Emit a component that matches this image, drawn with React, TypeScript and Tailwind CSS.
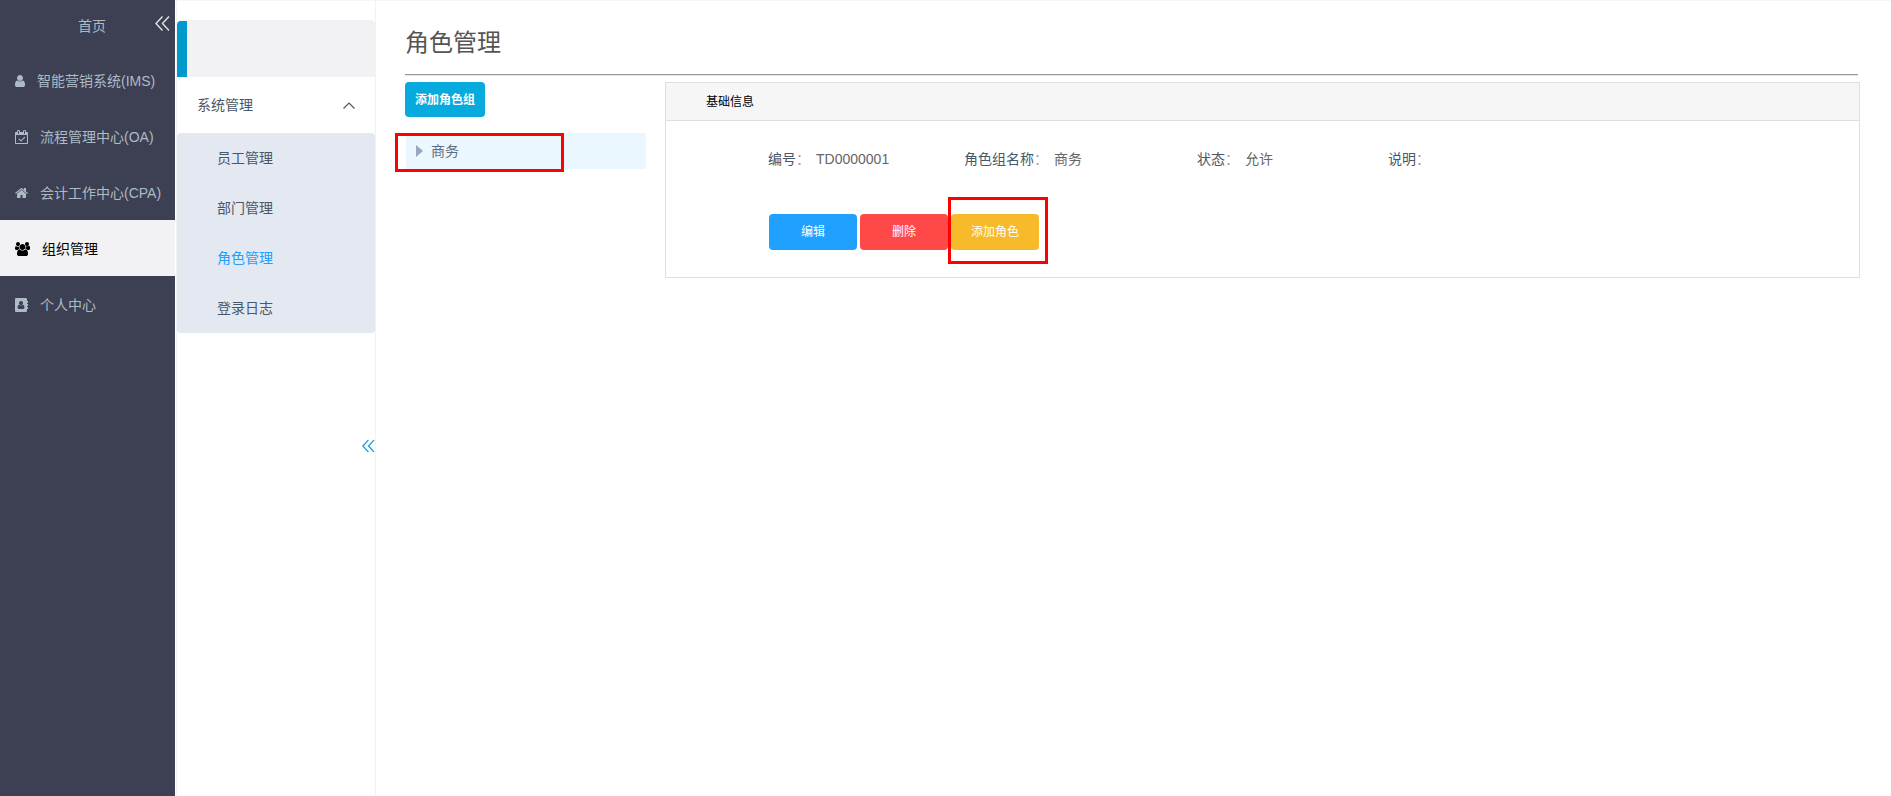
import { ReactNode } from 'react'
import clsx from 'clsx'

interface IconProps {
  className?: string
}

interface NavItem {
  label: string
  icon: ReactNode
  active?: boolean
}

function UserIcon() {
  return (
    <svg viewBox="256 128 1280 1536" className="h-3 w-[10px]" fill="currentColor" aria-hidden="true">
      <path d="M1536 1399q0 109-62.5 187t-150.5 78h-854q-88 0-150.5-78t-62.5-187q0-85 8.5-160.5t31.5-152 58.5-131 94-89 134.5-34.5q131 128 313 128t313-128q76 0 134.5 34.5t94 89 58.5 131 31.5 152 8.5 160.5zm-256-887q0 159-112.5 271.5t-271.5 112.5-271.5-112.5-112.5-271.5 112.5-271.5 271.5-112.5 271.5 112.5 112.5 271.5z" />
    </svg>
  )
}

function CalendarIcon() {
  return (
    <svg viewBox="0 0 1664 1792" className="h-[14px] w-[13px]" fill="currentColor" aria-hidden="true">
      <path d="M1303 964l-512 512q-10 9-23 9t-23-9l-288-288q-9-10-9-23t9-22l46-46q9-9 22-9t23 9l220 220 444-444q10-9 23-9t22 9l46 46q9 9 9 22t-9 23zm-1175 700h1408v-1024h-1408v1024zm384-1216v-288q0-14-9-23t-23-9h-64q-14 0-23 9t-9 23v288q0 14 9 23t23 9h64q14 0 23-9t9-23zm768 0v-288q0-14-9-23t-23-9h-64q-14 0-23 9t-9 23v288q0 14 9 23t23 9h64q14 0 23-9t9-23zm384-64v1280q0 52-38 90t-90 38h-1408q-52 0-90-38t-38-90v-1280q0-52 38-90t90-38h128v-96q0-66 47-113t113-47h64q66 0 113 47t47 113v96h384v-96q0-66 47-113t113-47h64q66 0 113 47t47 113v96h128q52 0 90 38t38 90z" />
    </svg>
  )
}

function HomeIcon() {
  return (
    <svg viewBox="64 0 1664 1792" className="h-[14px] w-[13px]" fill="currentColor" aria-hidden="true">
      <path d="M1472 992v480q0 26-19 45t-45 19h-384v-384h-256v384h-384q-26 0-45-19t-19-45v-480q0-1 .5-3t.5-3l575-474 575 474q1 2 1 6zm223-69l-62 74q-8 9-21 11h-3q-13 0-21-7l-692-577-692 577q-12 8-24 7-13-2-21-11l-62-74q-8-10-7-23.5t11-21.5l719-599q32-26 76-26t76 26l244 204v-195q0-14 9-23t23-9h192q14 0 23 9t9 23v408l219 182q10 8 11 21.5t-7 23.5z" />
    </svg>
  )
}

function UsersIcon() {
  return (
    <svg viewBox="64 0 1920 1792" className="h-[14px] w-[15px]" fill="currentColor" aria-hidden="true">
      <path d="M657 896q-162 5-265 128h-134q-82 0-138-40.5t-56-118.5q0-353 124-353 6 0 43.5 21t97.5 42.5 119 21.5q67 0 133-23-5 37-5 66 0 159 90 294zm1071 637q0 120-73 189.5t-194 69.5h-874q-121 0-194-69.5t-73-189.5q0-53 3.5-103.5t14-109 26.5-108.5 43-97.5 62-81 85.5-53.5 111.5-20q10 0 43 21.5t73 48 107 48 135 21.5 135-21.5 107-48 73-48 43-21.5q61 0 111.5 20t85.5 53.5 62 81 43 97.5 26.5 108.5 14 109 3.5 103.5zm-1024-1277q0 106-75 181t-181 75-181-75-75-181 75-181 181-75 181 75 75 181zm704 384q0 159-112.5 271.5t-271.5 112.5-271.5-112.5-112.5-271.5 112.5-271.5 271.5-112.5 271.5 112.5 112.5 271.5zm576 225q0 78-56 118.5t-138 40.5h-134q-103-123-265-128 90-135 90-294 0-29-5-66 66 23 133 23 59 0 119-21.5t97.5-42.5 43.5-21q124 0 124 353zm-128-609q0 106-75 181t-181 75-181-75-75-181 75-181 181-75 181 75 75 181z" />
    </svg>
  )
}

function AddressBookIcon() {
  return (
    <svg viewBox="0 0 1664 1792" className="h-[14px] w-[13px]" fill="currentColor" fillRule="evenodd" aria-hidden="true">
      <path d="M1028 644q0 107-76.5 183t-183.5 76-183.5-76-76.5-183q0-108 76.5-184t183.5-76 183.5 76 76.5 184zm-48 220q46 0 82.5 17t60 47.5 39.5 67 24 81 11.5 82.5 3.5 79q0 67-39.5 118.5t-105.5 51.5h-576q-66 0-105.5-51.5t-39.5-118.5q0-48 4.5-93.5t18.5-98.5 36.5-91.5 63-64.5 93.5-26h5q7 4 32 19.5t35.5 21 33 17 37 16 35 9 39.5 4.5 39.5-4.5 35-9 37-16 33-17 35.5-21 32-19.5zm684-256q0 13-9.5 22.5t-22.5 9.5h-96v128h96q13 0 22.5 9.5t9.5 22.5v192q0 13-9.5 22.5t-22.5 9.5h-96v128h96q13 0 22.5 9.5t9.5 22.5v192q0 13-9.5 22.5t-22.5 9.5h-96v224q0 66-47 113t-113 47h-1216q-66 0-113-47t-47-113v-1472q0-66 47-113t113-47h1216q66 0 113 47t47 113v224h96q13 0 22.5 9.5t9.5 22.5z" />
    </svg>
  )
}

function DoubleLeftIcon({ className }: IconProps) {
  return (
    <svg viewBox="0 0 15 15" className={className} fill="none" stroke="currentColor" strokeWidth="1.4" aria-hidden="true">
      <path d="M7.5 0.5 1 7.5l6.5 7M14 0.5 7.5 7.5l6.5 7" />
    </svg>
  )
}

const navItems: NavItem[] = [
  { label: '智能营销系统(IMS)', icon: <UserIcon /> },
  { label: '流程管理中心(OA)', icon: <CalendarIcon /> },
  { label: '会计工作中心(CPA)', icon: <HomeIcon /> },
  { label: '组织管理', icon: <UsersIcon />, active: true },
  { label: '个人中心', icon: <AddressBookIcon /> },
]

const subItems = ['员工管理', '部门管理', '角色管理', '登录日志']

const details = [
  { label: '编号', value: 'TD0000001' },
  { label: '角色组名称', value: '商务' },
  { label: '状态', value: '允许' },
  { label: '说明', value: '' },
]

function Sidebar() {
  return (
    <nav className="relative w-[175px] shrink-0 bg-[#3c4052] text-[#aebac4]">
      <a href="#" className="flex h-[52px] items-center pl-[78px]">
        首页
      </a>
      <button type="button" aria-label="收起菜单" className="absolute top-4 right-[5px] text-[#dfe3e8]">
        <DoubleLeftIcon className="size-[15px]" />
      </button>
      <ul>
        {navItems.map((item) => (
          <li key={item.label}>
            <a
              href="#"
              className={clsx(
                'flex h-14 items-center gap-3 pt-px pl-[15px] whitespace-nowrap',
                item.active && 'bg-[#f2f2f4] text-black'
              )}
            >
              {item.icon}
              {item.label}
            </a>
          </li>
        ))}
      </ul>
    </nav>
  )
}

function SubMenu({ current }: { current: string }) {
  return (
    <aside className="relative ml-px w-[200px] shrink-0 border-x border-[#f2f2f4] pt-5 text-[#48576a]">
      <div className="h-[57px] overflow-hidden rounded-t bg-[#f2f2f4] pt-px">
        <div className="h-full w-[10px] rounded-tl-sm bg-[#0099cc]" />
      </div>
      <button type="button" className="flex h-14 w-full items-center justify-between pr-5 pl-5">
        系统管理
        <svg viewBox="0 0 12 7" className="h-[7px] w-3" fill="none" stroke="currentColor" strokeWidth="1.2" aria-hidden="true">
          <path d="M0.5 6.5 6 1l5.5 5.5" />
        </svg>
      </button>
      <ul className="rounded-sm bg-[#e4e8f1]">
        {subItems.map((label) => (
          <li key={label}>
            <a href="#" className={clsx('flex h-[50px] items-center pl-10', label === current && 'text-[#20a0ff]')}>
              {label}
            </a>
          </li>
        ))}
      </ul>
      <button type="button" aria-label="收起子菜单" className="absolute top-[56%] right-0 -translate-y-1/2 text-[#0a9bd8]">
        <DoubleLeftIcon className="size-[13px]" />
      </button>
    </aside>
  )
}

function RoleGroupTree() {
  return (
    <div className="w-[241px] shrink-0">
      <button type="button" className="h-[35px] w-20 rounded bg-[#06aadd] text-xs font-bold text-white">
        添加角色组
      </button>
      <div className="relative mt-4 ml-px">
        <button type="button" className="flex h-9 w-full items-center gap-2 bg-[#ebf7ff] pl-[10px] text-[#5e6d82]">
          <svg viewBox="0 0 7 12" className="h-3 w-[7px]" fill="#97a8be" aria-hidden="true">
            <path d="M0 0 7 6 0 12z" />
          </svg>
          商务
        </button>
        <div className="pointer-events-none absolute top-0 -left-[11px] h-[39px] w-[169px] border-3 border-[#ff0000]" />
      </div>
    </div>
  )
}

function BasicInfo() {
  return (
    <section className="min-w-0 flex-1 border border-[#dfdfdf]">
      <h2 className="flex h-[38px] items-center border-b border-[#dfdfdf] bg-[#f6f6f6] pl-10 text-xs text-black">
        基础信息
      </h2>
      <div className="pt-7 pr-4 pb-[27px] pl-[102px]">
        <dl className="grid grid-cols-[196px_233px_191px_auto] leading-5">
          {details.map(({ label, value }) => (
            <div key={label} className="flex gap-[6px] whitespace-nowrap">
              <dt className="text-[#48576a]">
                {label}
                <span className="text-[#98a1ad]">：</span>
              </dt>
              <dd className="text-[#666666]">{value}</dd>
            </div>
          ))}
        </dl>
        <div className="mt-[45px] ml-px flex gap-[3px] text-xs text-white">
          <button type="button" className="h-9 w-[88px] rounded bg-[#20a0ff]">
            编辑
          </button>
          <button type="button" className="h-9 w-[88px] rounded bg-[#ff4949]">
            删除
          </button>
          <div className="relative">
            <button type="button" className="h-9 w-[88px] rounded bg-[#f7ba2a]">
              添加角色
            </button>
            <div className="pointer-events-none absolute -top-[17px] -left-[3px] h-[67px] w-[100px] border-3 border-[#ff0000]" />
          </div>
        </div>
      </div>
    </section>
  )
}

export default function App() {
  return (
    <div className="flex min-h-screen bg-white font-['Liberation_Sans','Noto_Sans_CJK_SC',sans-serif] text-sm">
      <Sidebar />
      <div className="flex min-w-0 flex-1 shadow-[inset_0_1px_0_#f5f5f5]">
        <SubMenu current="角色管理" />
        <main className="min-w-0 flex-1 pr-[31px] pl-[29px]">
          <h1 className="mr-[2px] flex h-[75px] items-center border-b border-[#999999] pt-3 text-2xl text-[#555555] shadow-[0_1px_0_#e6e6e6]">
            角色管理
          </h1>
          <div className="flex gap-[19px] pt-[7px]">
            <RoleGroupTree />
            <BasicInfo />
          </div>
        </main>
      </div>
    </div>
  )
}
